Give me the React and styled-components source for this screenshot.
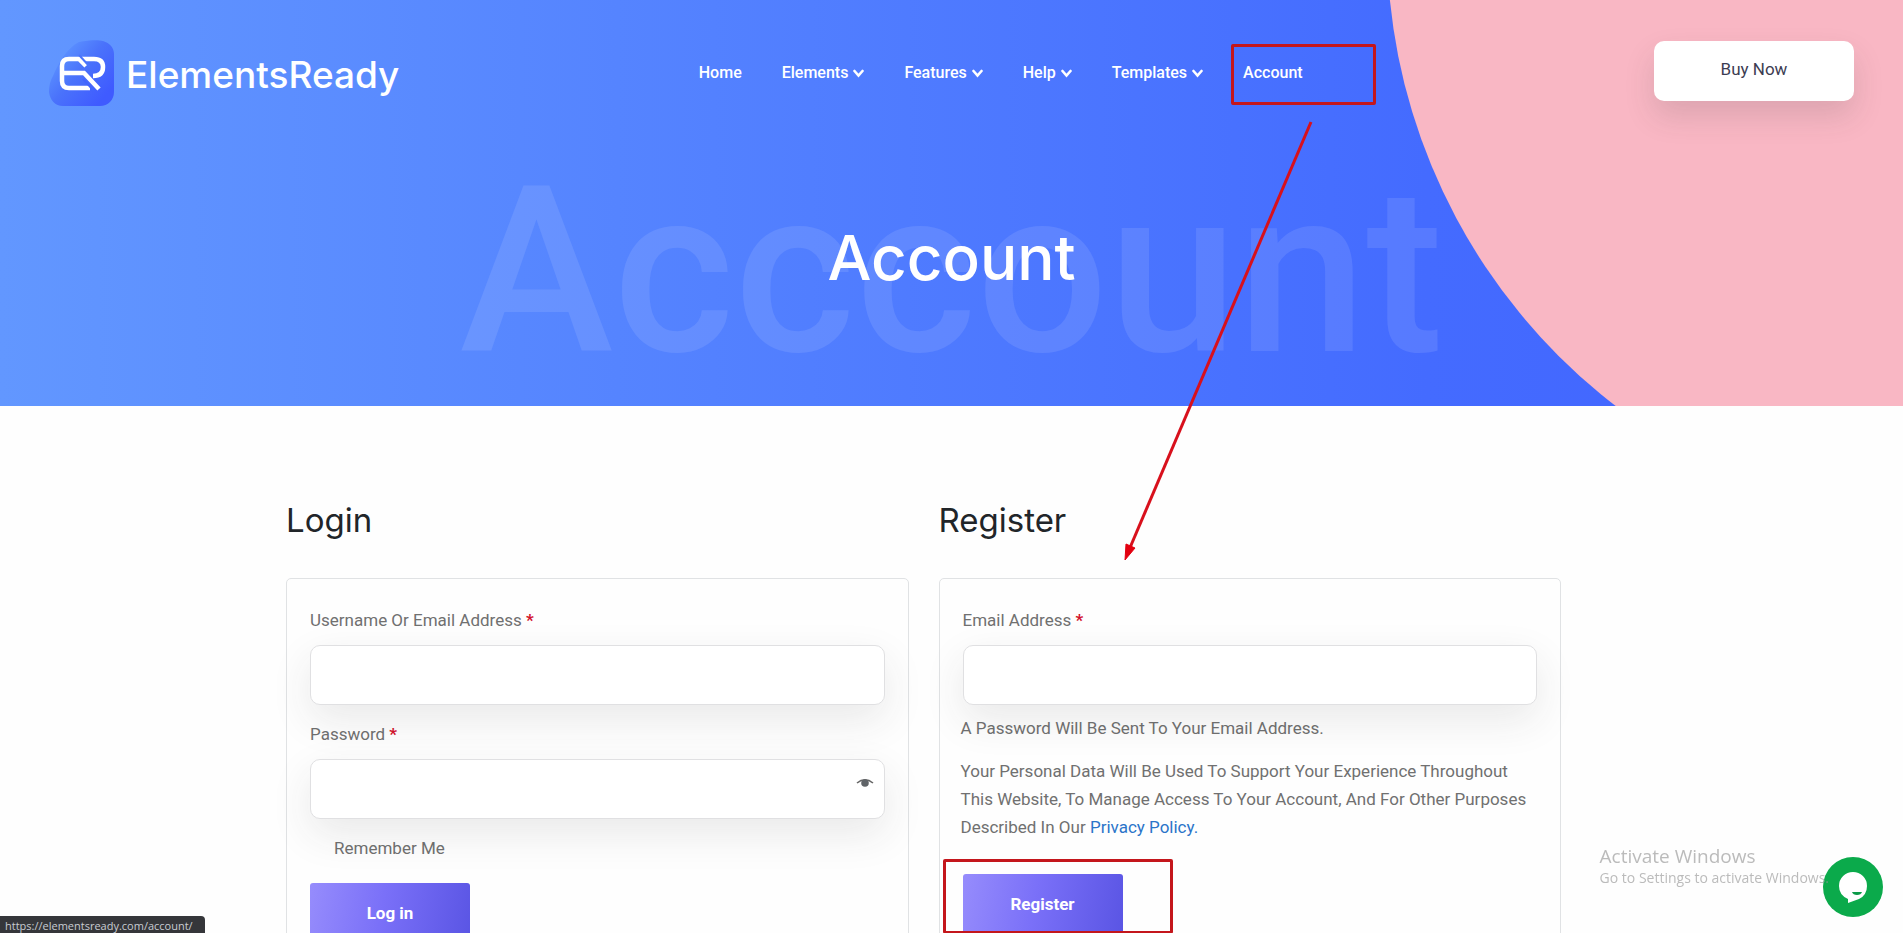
import React from 'react'
import styled, { createGlobalStyle } from 'styled-components'

const GlobalStyle = createGlobalStyle`
    html {
        scrollbar-width: none;
    }
    body {
        margin: 0;
        background: #fefefe;
        color: #707070;
        font-family: Roboto, sans-serif;
        font-size: 16px;
        line-height: 28px;
    }
    *, *::before, *::after {
        box-sizing: border-box;
    }
`

const Page = styled.div`
    position: relative;
    overflow: hidden;
`

const Hero = styled.header`
    position: relative;
    overflow: hidden;
    padding-bottom: 10px;
    background: linear-gradient(90deg, #6297ff 0%, #446bff 75%, #4163ff 100%);
`

const Circle = styled.div`
    position: absolute;
    top: -643px;
    right: -654px;
    width: 1170px;
    height: 1170px;
    border-radius: 50%;
    background: #f9b7c4;
`

const TopBar = styled.div`
    position: relative;
    display: flex;
    align-items: flex-start;
    height: 148px;
    padding: 40px 49px 0;
`

const Logo = styled.a`
    display: flex;
    align-items: center;
    gap: 12px;
    color: #fff;
    font-family: Inter, sans-serif;
    font-size: 37px;
    font-weight: 500;
    line-height: 62px;
    text-decoration: none;
    span {
        padding-top: 4px;
    }
`

const Nav = styled.nav`
    flex: 1;
    display: flex;
    justify-content: center;
    gap: 40px;
    padding: 19px 52px 0 0;
`

const NavLink = styled.a`
    position: relative;
    display: flex;
    align-items: center;
    gap: 5px;
    color: #fff;
    font-weight: 500;
    text-decoration: none;
`

const BuyButton = styled.button`
    width: 200px;
    height: 60px;
    margin-top: 1px;
    padding: 0 0 4px;
    border: 0;
    border-radius: 10px;
    background: #fff;
    color: #3c3c52;
    font: 400 17px Roboto, sans-serif;
    box-shadow: 0 15px 30px rgba(60, 60, 60, 0.15);
`

const Banner = styled.div`
    position: relative;
    display: grid;
    place-items: center;
`

const Ghost = styled.span`
    grid-area: 1 / 1;
    color: rgba(255, 255, 255, 0.1);
    font-size: 232px;
    font-weight: 500;
    line-height: 248px;
`

const Title = styled.h1`
    grid-area: 1 / 1;
    margin: 0;
    padding-bottom: 28px;
    color: #fff;
    font-family: Inter, sans-serif;
    font-size: 62px;
    font-weight: 500;
    line-height: 76px;
`

const Columns = styled.main`
    display: grid;
    grid-template-columns: 1fr 1fr;
    gap: 30px;
    width: 67%;
    margin: 90px 0 60px 15.03%;
`

const Column = styled.section`
    display: flex;
    flex-direction: column;
`

const Heading = styled.h2`
    margin: 0 0 34px;
    color: #212529;
    font-family: Inter, sans-serif;
    font-size: 33px;
    font-weight: 400;
    line-height: 48px;
`

const Card = styled.form`
    flex: 1;
    padding: 27px 23px 40px;
    border: 1px solid #e0e2e4;
    border-radius: 5px;
`

const Label = styled.label`
    display: block;
    margin-bottom: 11px;
    font-size: 17px;
`

const Star = styled.span`
    color: #d3122c;
    font-weight: 700;
`

const Field = styled.div`
    position: relative;
    margin-bottom: ${props => props.$gap}px;
`

const Input = styled.input`
    display: block;
    width: 100%;
    height: 60px;
    padding: 0 20px;
    border: 1px solid #e0e0e2;
    border-radius: 10px;
    background: #fff;
    font: 400 16px Roboto, sans-serif;
    box-shadow: 0 15px 40px rgba(50, 50, 50, 0.1);
`

const ShowPassword = styled.button`
    position: absolute;
    top: 14px;
    right: 10px;
    display: flex;
    padding: 0;
    border: 0;
    background: none;
`

const Remember = styled.label`
    display: block;
    margin-bottom: 21px;
    padding-left: 24px;
    font-size: 17px;
    input {
        position: absolute;
        opacity: 0;
    }
`

const Note = styled.p`
    margin: 0 0 15px -2px;
    font-size: 17px;
`

const PolicyLink = styled.a`
    color: #2b74c9;
    text-decoration: none;
`

const SubmitWrap = styled.div`
    position: relative;
    width: 160px;
    margin-top: 33px;
`

const Submit = styled.button`
    display: block;
    width: 160px;
    height: 60px;
    border: 0;
    border-radius: 3px;
    background: linear-gradient(100deg, #968cfc 0%, #7a70f8 45%, #5a55e4 100%);
    color: #fff;
    font: 700 17px Roboto, sans-serif;
`

const Mark = styled.span`
    position: absolute;
    top: ${props => props.$top}px;
    left: ${props => props.$left}px;
    width: ${props => props.$width}px;
    height: ${props => props.$height}px;
    border: 3px solid #c4161c;
    border-radius: 2px;
    pointer-events: none;
`

const Arrow = styled.svg`
    position: absolute;
    top: 116px;
    left: 59%;
    pointer-events: none;
`

const Chat = styled.button`
    position: fixed;
    right: 20px;
    bottom: 16px;
    width: 60px;
    height: 60px;
    padding: 0;
    border: 0;
    border-radius: 50%;
    background: #0baa4b;
    svg {
        display: block;
    }
`

const Watermark = styled.div`
    position: fixed;
    right: 74px;
    bottom: 45px;
    color: rgba(150, 150, 150, 0.65);
    font-family: 'Open Sans', sans-serif;
    font-size: 14px;
    line-height: 20px;
    pointer-events: none;
    strong {
        display: block;
        font-size: 19px;
        font-weight: 400;
        line-height: 24px;
    }
`

const StatusBar = styled.div`
    position: fixed;
    left: 0;
    bottom: 0;
    padding: 2px 12px 0 5px;
    border-radius: 0 4px 0 0;
    background: #35363a;
    color: #c8ccd2;
    font: 400 11px/15px 'Open Sans', sans-serif;
`

const menu = [
    { name: 'Home' },
    { name: 'Elements', more: true },
    { name: 'Features', more: true },
    { name: 'Help', more: true },
    { name: 'Templates', more: true },
    { name: 'Account', marked: true },
]

const LogoIcon = () => (
    <svg width="65" height="66" viewBox="0 0 65 66" aria-hidden="true">
        <defs>
            <linearGradient id="logoBg" x1="0.1" y1="0.1" x2="0.9" y2="0.8">
                <stop offset="0.1" stopColor="#5c92ff" />
                <stop offset="0.5" stopColor="#4a72fb" />
                <stop offset="1" stopColor="#3f5bff" />
            </linearGradient>
        </defs>
        <path d="M30 2C40 0 50 0 54 1C61 3 65 8 65 14V52C65 60 59 66 51 66H14C6 66 1 60 0 52C0 46 1 41 4 36C10 22 18 8 30 2Z" fill="url(#logoBg)" />
        <g fill="none" stroke="#fff" strokeWidth="4.5">
            <path d="M37 26L30 19H20Q13 19 13 26V41Q13 48 20 48H41" />
            <path d="M13 33H35L50 49" />
            <path d="M33 19H45Q54 19 54 27Q54 36 44 36" />
        </g>
        <path d="M30 15L41 27" stroke="#4a74fc" strokeWidth="2" />
        <path d="M34 39L45 51" stroke="#4265fd" strokeWidth="2" />
    </svg>
)

const Chevron = () => (
    <svg width="11" height="9" viewBox="0 0 11 9" aria-hidden="true">
        <path d="M1.5 2L5.5 6.5L9.5 2" fill="none" stroke="#fff" strokeWidth="2.6" strokeLinecap="round" />
    </svg>
)

const Eye = () => (
    <svg width="20" height="20" viewBox="0 0 20 20" aria-hidden="true">
        <path d="M2 10Q10 3.5 18 10" fill="none" stroke="#666" strokeWidth="1.6" />
        <circle cx="10" cy="10" r="3.8" fill="#606468" />
    </svg>
)

const ChatIcon = () => (
    <svg width="60" height="60" viewBox="0 0 60 60" aria-hidden="true">
        <path d="M30 15A14 14 0 0 1 44 29Q44 38 36 42L25 46V42Q16 38 16 29A14 14 0 0 1 30 15Z" fill="#fff" />
        <path d="M29 35H39Q38 38 34 38Q30 38 29 35Z" fill="#0b9a48" />
    </svg>
)

const MenuItem = (props) => {
    return (
        <NavLink href="#">
            {props.name}
            {props.more && <Chevron />}
            {props.marked && <Mark $top={-15} $left={-12} $width={145} $height={61} />}
        </NavLink>
    )
}

const TextField = (props) => {
    return (
        <>
            <Label htmlFor={props.id}>{props.label} <Star>*</Star></Label>
            <Field $gap={props.gap}>
                <Input id={props.id} type={props.type} />
                {props.type === 'password' &&
                    <ShowPassword type="button" aria-label="Show password"><Eye /></ShowPassword>}
            </Field>
        </>
    )
}

const App = () => {

    let items = menu.map(el => <MenuItem key={el.name} name={el.name} more={el.more} marked={el.marked} />)

    return (
        <Page>
            <GlobalStyle />
            <Hero>
                <Circle />
                <TopBar>
                    <Logo href="#"><LogoIcon /><span>ElementsReady</span></Logo>
                    <Nav>{items}</Nav>
                    <BuyButton>Buy Now</BuyButton>
                </TopBar>
                <Banner>
                    <Ghost aria-hidden="true">Acccount</Ghost>
                    <Title>Account</Title>
                </Banner>
            </Hero>

            <Columns>
                <Column>
                    <Heading>Login</Heading>
                    <Card>
                        <TextField id="username" type="text" label="Username Or Email Address" gap={15} />
                        <TextField id="password" type="password" label="Password" gap={15} />
                        <Remember><input type="checkbox" />Remember Me</Remember>
                        <Submit type="button">Log in</Submit>
                    </Card>
                </Column>
                <Column>
                    <Heading>Register</Heading>
                    <Card>
                        <TextField id="email" type="email" label="Email Address" gap={9} />
                        <Note>A Password Will Be Sent To Your Email Address.</Note>
                        <Note>
                            Your Personal Data Will Be Used To Support Your Experience Throughout This Website,
                            To Manage Access To Your Account, And For Other Purposes Described In
                            Our <PolicyLink href="#">Privacy Policy.</PolicyLink>
                        </Note>
                        <SubmitWrap>
                            <Submit type="button">Register</Submit>
                            <Mark $top={-15} $left={-20} $width={230} $height={75} />
                        </SubmitWrap>
                    </Card>
                </Column>
            </Columns>

            <Arrow width="200" height="448" viewBox="0 0 200 448" aria-hidden="true">
                <path d="M188 6L6 434" stroke="#d8101c" strokeWidth="3" />
                <path d="M2 444L3 428L12 432Z" fill="#e3000f" stroke="#e3000f" />
            </Arrow>

            <Chat aria-label="Open chat"><ChatIcon /></Chat>
            <Watermark><strong>Activate Windows</strong>Go to Settings to activate Windows.</Watermark>
            <StatusBar>https://elementsready.com/account/</StatusBar>
        </Page>
    )
}

export default App
